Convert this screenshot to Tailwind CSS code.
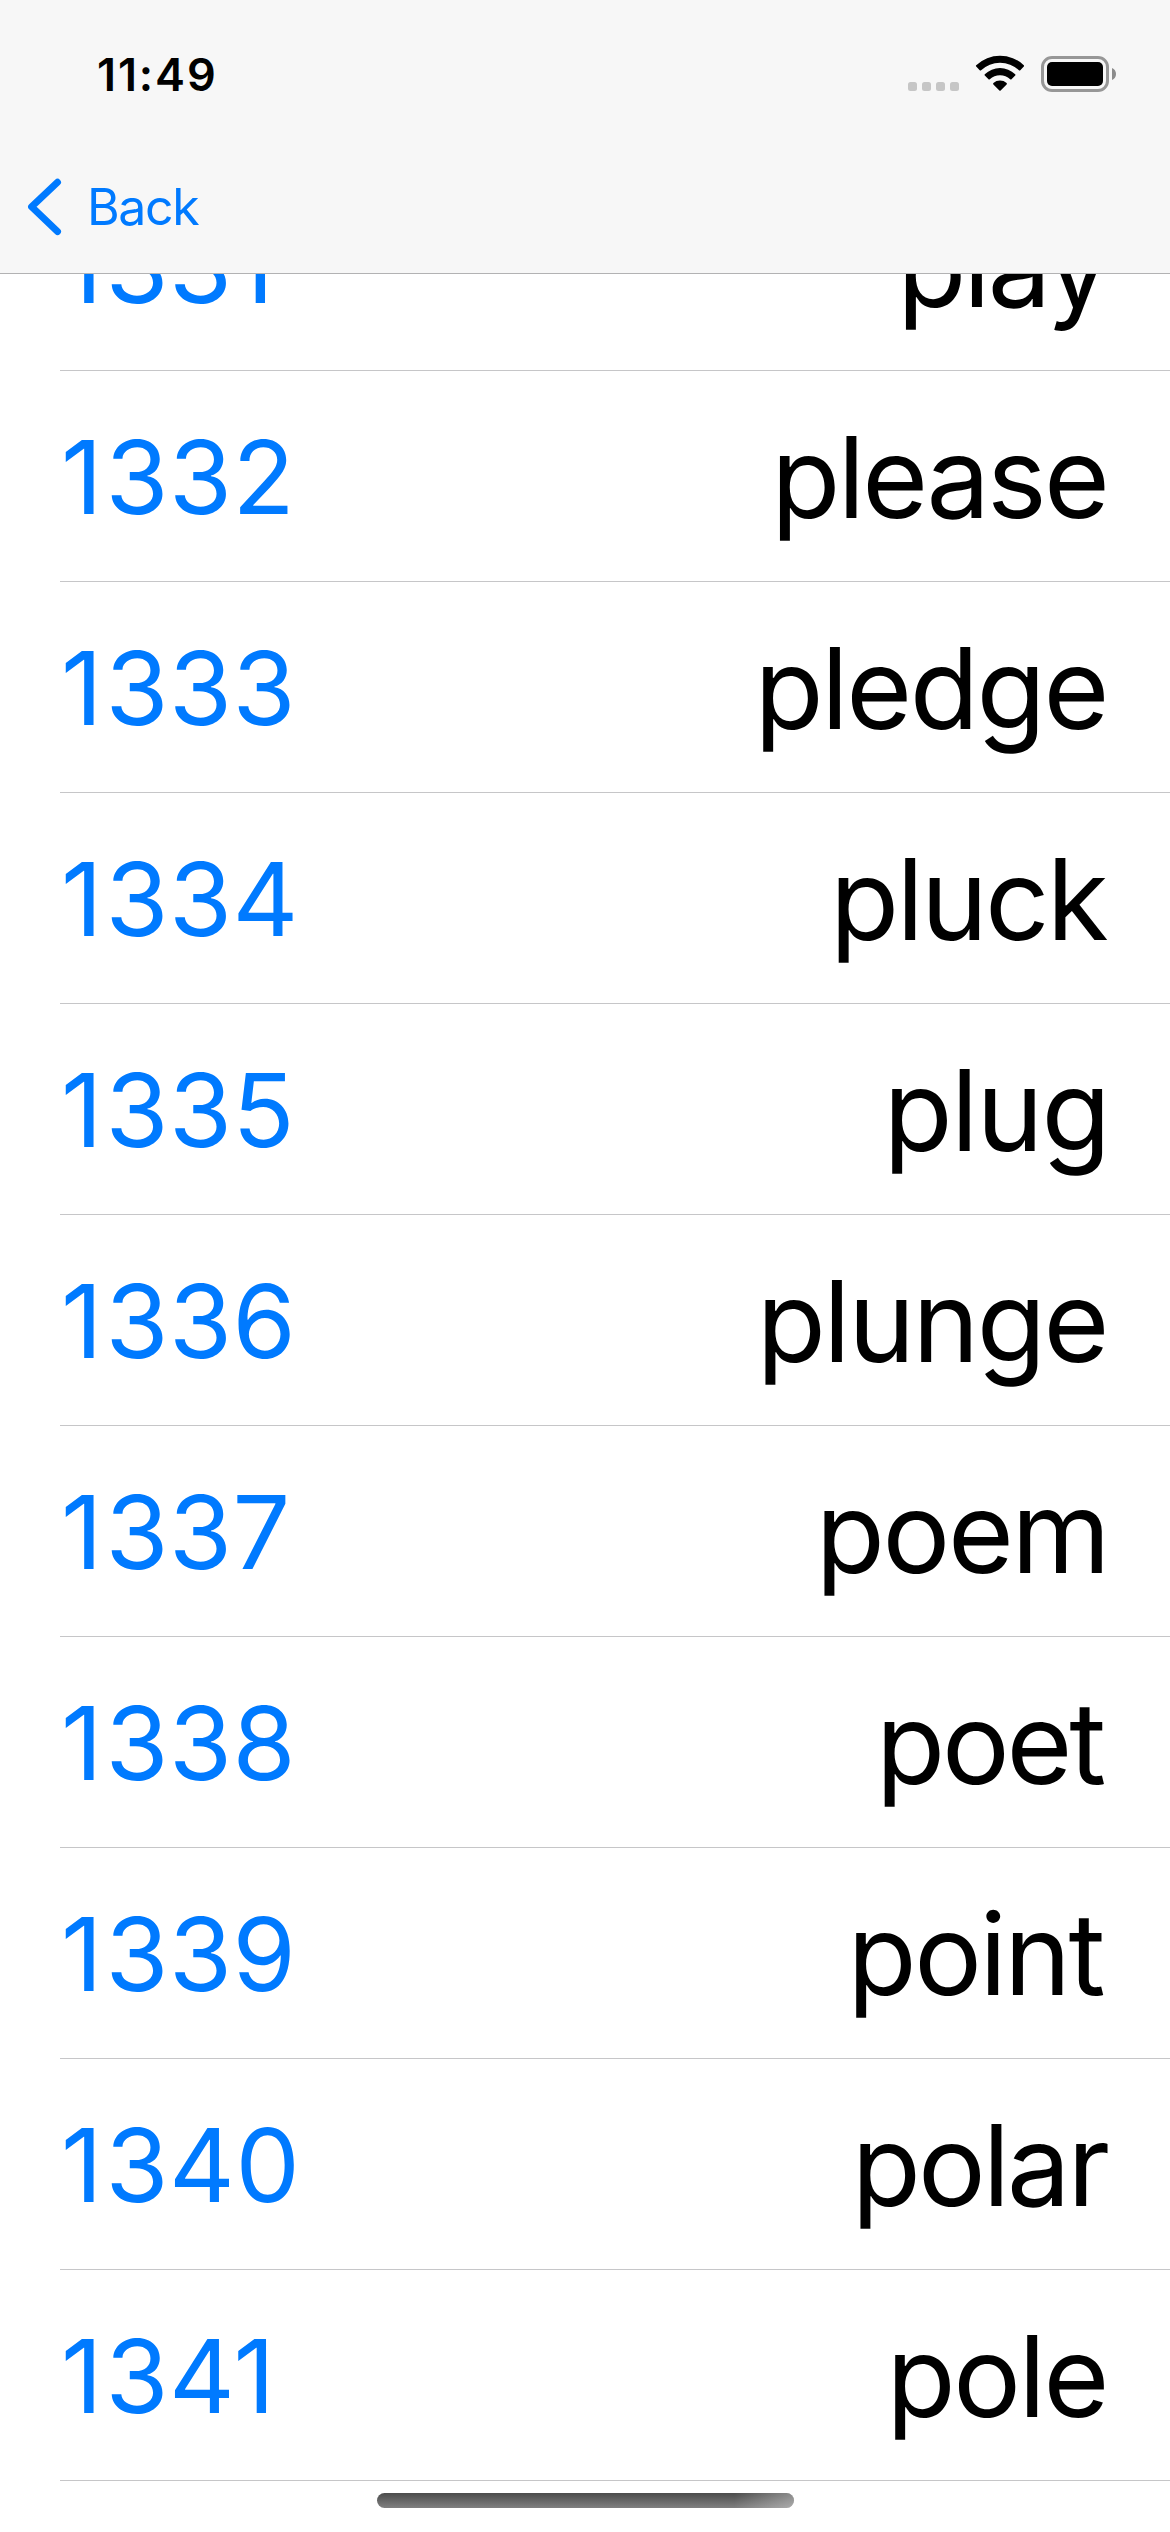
<!DOCTYPE html>
<html lang="en">
<head>
<meta charset="utf-8">
<title>Words</title>
<script src="https://cdn.jsdelivr.net/npm/@tailwindcss/browser@4"></script>
</head>
<body class="bg-white">
<div class="relative flex h-[2532px] w-[1170px] flex-col overflow-hidden bg-white font-['Inter',sans-serif] text-black">
  <header class="flex h-[274px] shrink-0 flex-col border-b border-[#b2b2b3] bg-[#f7f7f7]">
    <div class="flex h-[141px] items-start justify-between pr-[54px] pl-[97px]">
      <span class="text-[45px] leading-[149px] font-semibold tracking-[1.9px]">11:49</span>
      <div class="flex pt-[54px]">
        <svg class="h-[40px] w-[210px]" viewBox="905 54 210 40">
          <g fill="#c6c6c6">
            <rect x="907" y="82" width="9" height="9" rx="2.5"/>
            <rect x="921" y="82" width="9" height="9" rx="2.5"/>
            <rect x="935" y="82" width="9" height="9" rx="2.5"/>
            <rect x="949" y="82" width="9" height="9" rx="2.5"/>
          </g>
          <path d="M975.2 65.2 A34.5 34.5 0 0 1 1022.8 65.2 Q1023.400 65.900 1022.800 66.500 L1019.300 70.200 Q1018.600 70.800 1017.900 70.200 A27.500 27.500 0 0 0 980.100 70.200 Q979.400 70.800 978.700 70.200 L975.200 66.500 Q974.600 65.900 975.200 65.200Z"/>
          <path d="M983.800 74.200 A22 22 0 0 1 1014.200 74.200 Q1014.900 74.900 1014.200 75.500 L1010.500 79.200 Q1009.900 79.700 1009.200 79.200 A15 15 0 0 0 988.800 79.200 Q988.100 79.700 987.500 79.200 L983.800 75.500 Q983.100 74.900 983.800 74.200Z"/>
          <path d="M992.400 83 A10 10 0 0 1 1005.600 83 Q1006.300 83.700 1005.600 84.400 L999.600 90.500 Q999 91 998.400 90.500 L992.400 84.400 Q991.700 83.700 992.400 83Z"/>
          <rect x="1041.500" y="57.500" width="65" height="33" rx="9.500" fill="none" stroke="#979797" stroke-width="3"/>
          <rect x="1046" y="62" width="56" height="24" rx="5"/>
          <path d="M1111 68 C1113.500 69 1115 71.300 1115 74 C1115 76.700 1113.500 79 1111 80Z" fill="#8c8c8c"/>
        </svg>
      </div>
    </div>
    <div class="flex h-[132px] items-start pl-[26px] text-[#007aff]">
      <svg class="mt-[36px] h-[60px] w-[36px]" viewBox="26 177 36 60" fill="none" stroke="currentColor" stroke-width="7" stroke-linecap="round" stroke-linejoin="round"><path d="M57.500 182.300 L31.600 206.800 L57.500 231.500"/></svg>
      <span class="ml-[25px] text-[50px] leading-[132px] tracking-[-1.4px]">Back</span>
    </div>
  </header>
  <main class="min-h-0 flex-1 overflow-hidden">
    <ul class="-mt-[114px] flex flex-col pl-[60px] text-[113px] leading-[213px] tracking-[-2.5px] [&_b]:text-[102px] [&_b]:leading-[212px] [&_b]:font-normal [&_b]:tracking-[0.5px] [&_b]:text-[#007aff] [&_b]:first-letter:tracking-[3px] [&>li]:flex [&>li]:h-[211px] [&>li]:justify-between [&>li]:border-b [&>li]:border-[#c6c6c8] [&>li]:pr-[63px] [&>li]:pl-px">
      <li><b>1331</b><span class="tracking-[-3px]">play</span></li>
      <li><b>1332</b><span class="tracking-[-2.8px]">please</span></li>
      <li><b>1333</b><span class="tracking-[-2.4px]">pledge</span></li>
      <li><b>1334</b><span class="mr-px tracking-[-2.8px]">pluck</span></li>
      <li><b>1335</b><span class="-mr-[2px] tracking-[-1.8px]">plug</span></li>
      <li><b>1336</b><span class="tracking-[-2.5px]">plunge</span></li>
      <li><b>1337</b><span class="-mr-px tracking-[-2.4px]">poem</span></li>
      <li><b>1338</b><span class="mr-[4px] tracking-[-3.2px]">poet</span></li>
      <li><b>1339</b><span class="mr-[4px] tracking-[-2.5px]">point</span></li>
      <li><b>1340</b><span class="tracking-[-3px]">polar</span></li>
      <li><b>1341</b><span class="tracking-[-2.4px]">pole</span></li>
    </ul>
  </main>
  <div class="absolute top-[2493px] left-[377px] h-[15px] w-[417px] overflow-hidden rounded-full bg-linear-to-b from-[#4c4c4c] to-[#808080]">
    <div class="ml-auto h-full w-[60px] bg-linear-to-r from-white/0 to-white/35"></div>
  </div>
</div>
</body>
</html>
